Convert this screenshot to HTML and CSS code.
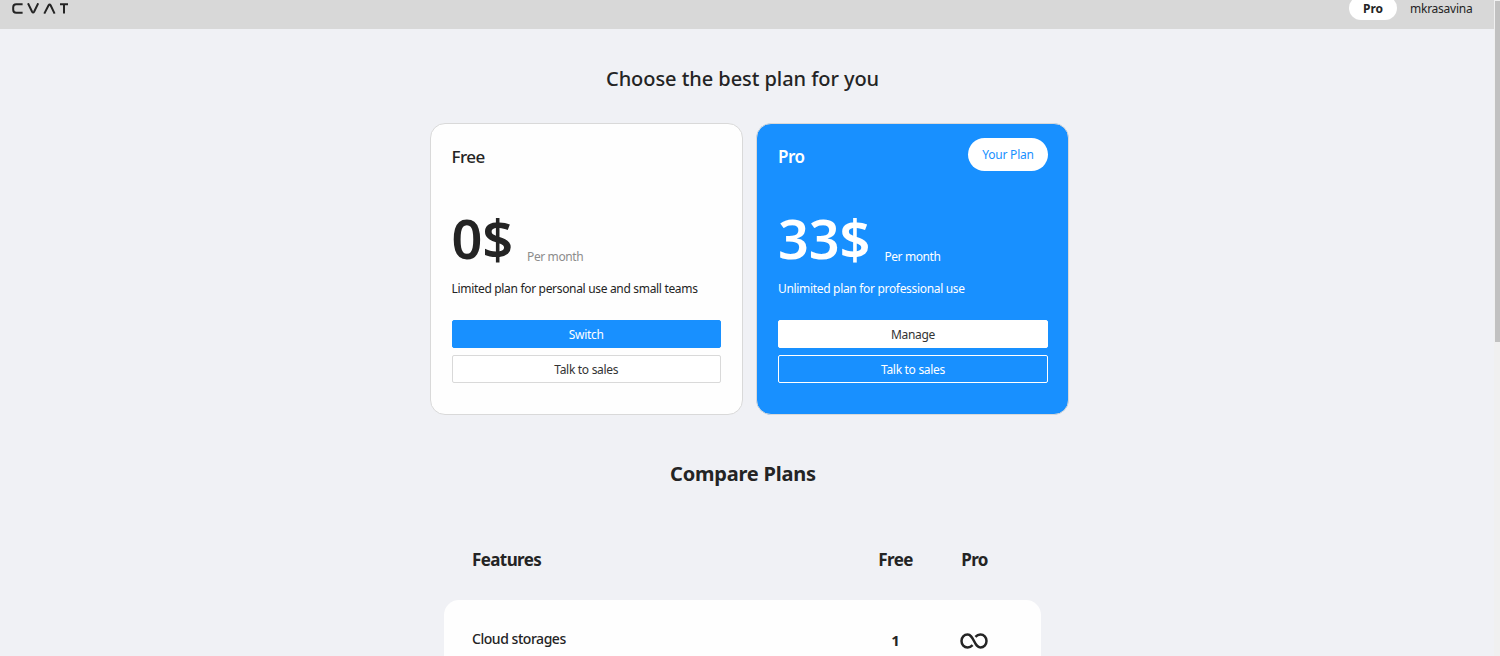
FILE: index.html
```
<!DOCTYPE html>
<html lang="en">
<head>
<meta charset="utf-8">
<title>CVAT</title>
<link rel="stylesheet" href="styles.css">
</head>
<body>
<div class="page">
  <header class="header">
    <svg class="logo" width="58" height="12" viewBox="0 0 58 12" fill="none" stroke="#242424" stroke-width="2" role="img" aria-label="CVAT">
      <path d="M10.6 1.2H4.2Q1.2 1.2 1.2 4.2V6.8Q1.2 9.8 4.2 9.8H10.6"/>
      <path d="M16 0.3L20.1 8.8Q21.1 10.4 22.1 8.8L26.2 0.3"/>
      <path d="M32.3 10.6L36.6 2.2Q37.6 0.6 38.6 2.2L42.6 10.6"/>
      <path d="M48 1.2H56M52 1.2V10.6"/>
    </svg>
    <div class="account">
      <span class="account-plan">Pro</span>
      <span class="account-name">mkrasavina</span>
    </div>
  </header>
  <main class="content">
    <h1 class="title">Choose the best plan for you</h1>
    <div class="plans">
      <section class="plan">
        <div class="plan-head"><h2 class="plan-name">Free</h2></div>
        <div class="price"><span class="amount">0$</span><span class="period">Per month</span></div>
        <p class="description">Limited plan for personal use and small teams</p>
        <button class="button button-primary">Switch</button>
        <button class="button">Talk to sales</button>
      </section>
      <section class="plan plan-pro">
        <div class="plan-head"><h2 class="plan-name">Pro</h2><span class="badge">Your Plan</span></div>
        <div class="price"><span class="amount">33$</span><span class="period">Per month</span></div>
        <p class="description">Unlimited plan for professional use</p>
        <button class="button button-light">Manage</button>
        <button class="button button-primary button-outline">Talk to sales</button>
      </section>
    </div>
    <h2 class="compare-title">Compare Plans</h2>
    <div class="row row-head"><span class="feature-head">Features</span><span class="cell">Free</span><span class="cell">Pro</span></div>
    <div class="table">
      <div class="row">
        <span class="feature">Cloud storages</span>
        <span class="cell cell-value">1</span>
        <span class="cell cell-icon">
          <svg class="infinity" width="28" height="16" viewBox="0 0 28 16" fill="none" stroke="#242424" stroke-width="2.5" aria-label="Unlimited">
            <path d="M12.6 12.2C11 13.8 9.5 14.4 7.6 14.4C4.1 14.4 1.5 11.6 1.5 8S4.1 1.6 7.6 1.6C10.6 1.6 11.8 3.8 14 8C16.2 12.2 17.4 14.4 20.4 14.4C23.9 14.4 26.5 11.6 26.5 8S23.9 1.6 20.4 1.6C18.5 1.6 17 2.2 15.4 3.8"/>
          </svg>
        </span>
      </div>
    </div>
  </main>
</div>
<div class="scrollbar"><div class="thumb"></div></div>
</body>
</html>
```
FILE: styles.css
```
* { box-sizing: border-box; }
body {
  margin: 0;
  height: 656px;
  overflow: hidden;
  display: flex;
  background: #f0f1f5;
  color: #242424;
  font-family: "Noto Sans", "Open Sans", sans-serif;
  font-size: 12px;
}
h1, h2, p { margin: 0; }
.page { width: 1494px; height: 656px; overflow: hidden; }
.header {
  height: 29px;
  padding: 0 21px 0 12px;
  display: flex;
  justify-content: space-between;
  background: #d8d8d8;
}
.logo { margin-top: 3px; }
.account { display: flex; gap: 14px; line-height: 18px; }
.account-plan {
  width: 48px;
  height: 24px;
  margin-top: -4px;
  border-radius: 12px;
  background: #fff;
  font-weight: 700;
  line-height: 25px;
  text-align: center;
}
.account-name { width: 63px; margin-left: -1px; white-space: nowrap; letter-spacing: -0.24px; }
.content { display: flex; flex-direction: column; }
.title {
  margin-left: 606px;
  padding-top: 35px;
  height: 94px;
  font-size: 20px;
  line-height: 30px;
  font-weight: 500;
  letter-spacing: -0.06px;
}
.plans { display: flex; gap: 13px; margin-left: 430px; }
.plan {
  width: 313px;
  height: 292px;
  padding: 13px 21px 0 20.5px;
  border: 1px solid #d9d9d9;
  border-radius: 15px;
  background: #fefefe;
}
.plan-pro { padding: 13px 20px 0 21px; background: #1890ff; color: #fff; }
.plan-head { display: flex; justify-content: space-between; height: 71px; }
.plan-name { font-size: 17px; line-height: 40px; font-weight: 500; letter-spacing: -0.5px; }
.plan-pro .plan-name { font-weight: 600; }
.badge {
  width: 80px;
  height: 33px;
  margin-top: 1px;
  border-radius: 17px;
  background: #fff;
  color: #1890ff;
  line-height: 34px;
  letter-spacing: -0.2px;
  text-align: center;
}
.price { display: flex; gap: 14px; height: 71px; }
.amount { font-size: 54px; line-height: 60px; font-weight: 600; letter-spacing: -0.1px; }
.period { padding-top: 41px; color: #8c8c8c; line-height: 16px; letter-spacing: -0.4px; }
.plan-pro .period { color: #fff; }
.description { height: 41px; line-height: 20px; white-space: nowrap; letter-spacing: -0.32px; }
.button {
  display: block;
  width: 100%;
  height: 28px;
  margin: 0 0 7px;
  padding: 2px 0 0;
  border: 1px solid #d9d9d9;
  border-radius: 2px;
  background: #fff;
  color: #333;
  font: 400 12px/24px "Noto Sans", "Open Sans", sans-serif;
  letter-spacing: -0.3px;
}
.button-primary { border-color: #1890ff; background: #1890ff; color: #fff; }
.button-light { border-color: #fff; }
.button-outline { border-color: #fff; }
.compare-title {
  margin: 44px 0 0 670px;
  height: 75px;
  font-size: 20px;
  line-height: 30px;
  font-weight: 700;
  letter-spacing: -0.2px;
}
.row { display: flex; align-items: center; padding-left: 28px; }
.row-head { margin-left: 444px; height: 50px; font-size: 17px; font-weight: 700; letter-spacing: -0.6px; }
.feature-head, .feature { width: 384px; }
.feature { padding-bottom: 3px; font-size: 14px; font-weight: 500; letter-spacing: -0.46px; }
.cell { width: 79px; display: flex; justify-content: center; }
.cell-value { font-size: 15px; font-weight: 700; }
.cell-icon { padding-top: 2px; }
.table {
  margin: 16px 0 0 444px;
  width: 597px;
  height: 90px;
  padding-top: 20px;
  border-radius: 15px;
  background: #fefefe;
}
.table .row { height: 40px; }
.infinity { margin-right: 2px; }
.scrollbar { width: 6px; padding: 1px 0 0 1px; background: #f0f0f0; }
.thumb { height: 341px; background: #c1c1c1; }
```
